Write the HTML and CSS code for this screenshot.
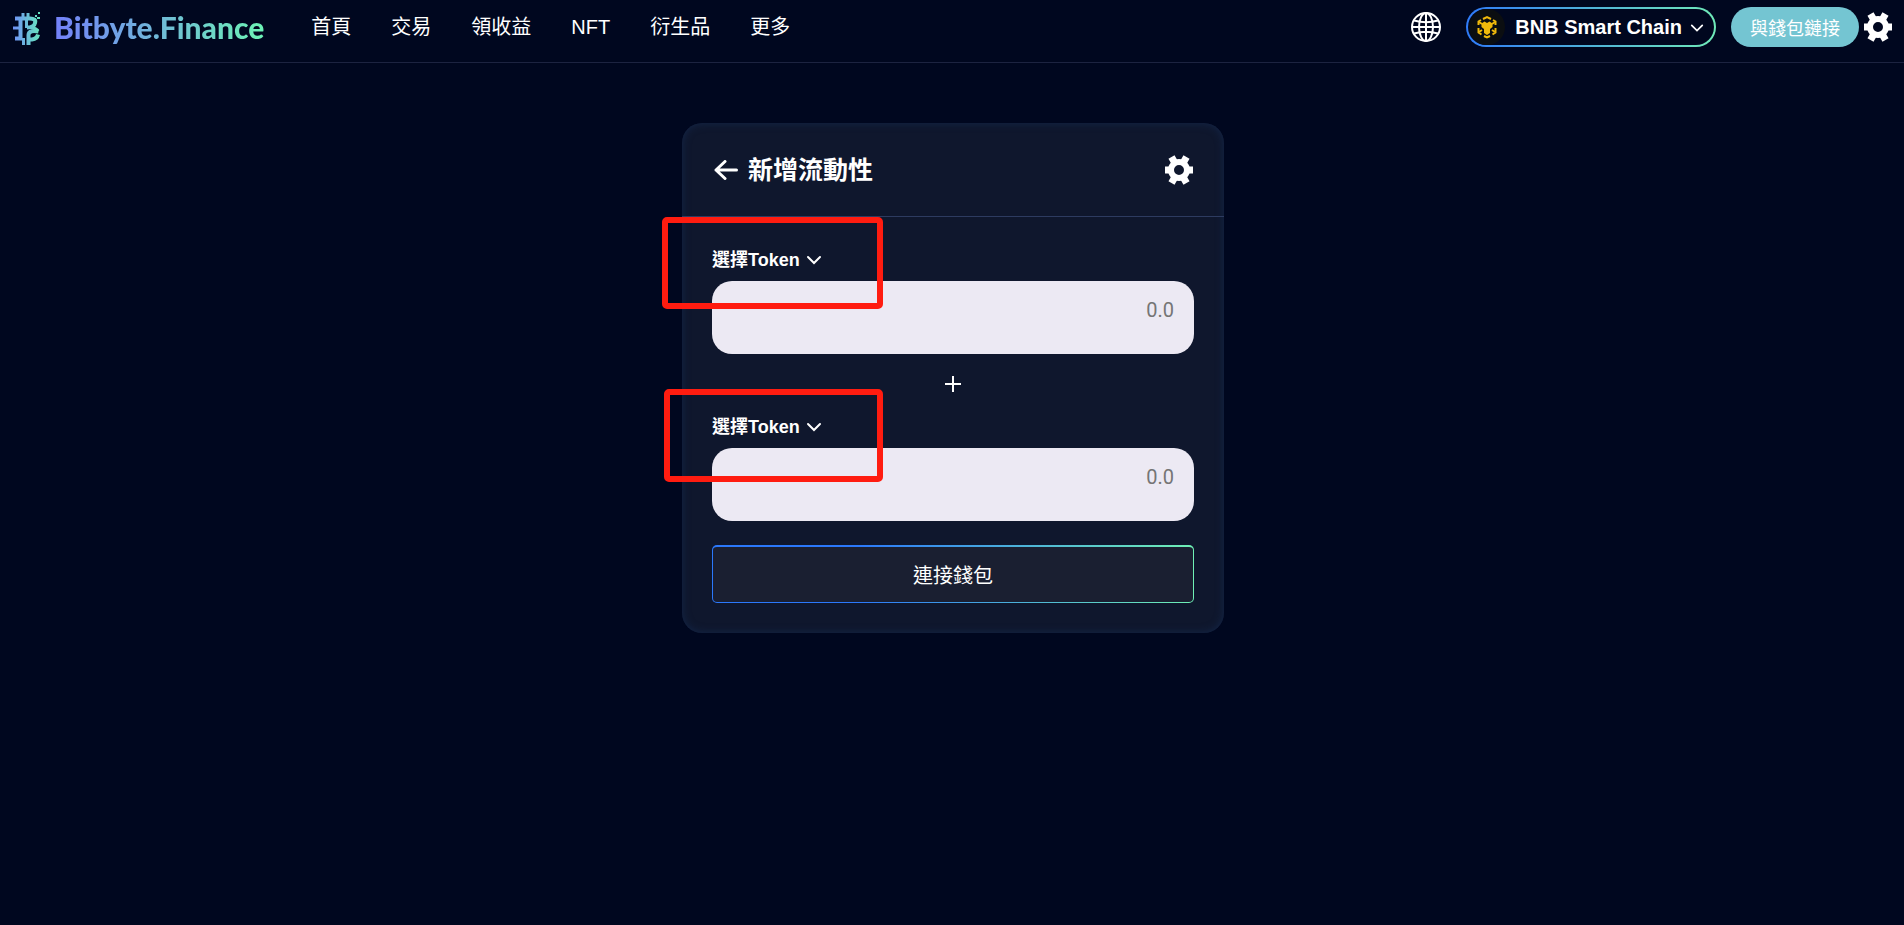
FILE: index.html
```html
<!DOCTYPE html>
<html lang="zh-Hant">
<head>
    <meta charset="UTF-8">
    <meta name="viewport" content="width=device-width, initial-scale=1.0">
    <title>Bitbyte.Finance</title>
    <link rel="stylesheet" href="styles.css">
</head>
<body>
    <svg class="sprite" width="0" height="0" aria-hidden="true">
        <symbol id="gear" viewBox="-15 -15 30 30">
            <g fill="none" stroke="currentColor">
                <circle r="8" stroke-width="6"/>
                <g stroke-width="7">
                    <path d="M-14 0H-9M9 0H14"/>
                    <path d="M-15 0H-9M9 0H15" transform="rotate(60)"/>
                    <path d="M-15 0H-9M9 0H15" transform="rotate(120)"/>
                </g>
            </g>
        </symbol>
        <symbol id="chevron" viewBox="0 0 16 10">
            <path d="M2 2l6 6 6-6" fill="none" stroke="currentColor" stroke-width="2" stroke-linecap="round"/>
        </symbol>
    </svg>

    <header class="header">
        <a href="#" class="logo">
            <svg class="logo-icon" viewBox="0 0 30 36" aria-hidden="true">
                <defs>
                    <linearGradient id="logo-gradient" gradientUnits="userSpaceOnUse" x1="2" y1="0" x2="28" y2="0">
                        <stop offset="0" stop-color="#6f93f5"/>
                        <stop offset="1" stop-color="#66e6bd"/>
                    </linearGradient>
                </defs>
                <g fill="none" stroke="url(#logo-gradient)">
                    <path d="M3 9.500H18C22 9.500 24 11 23 14C22.500 17 20 18.500 15 18.500M8.500 9V30M3 29.500H10" stroke-width="4"/>
                    <path d="M1 19H8M11 4V9M16 4V9M11.500 29V36" stroke-width="3"/>
                    <path d="M14.500 10V19" stroke-width="3"/>
                    <path d="M26.500 22.500C22 21.500 16.500 21.500 16.500 26V36M17 30.500H20C24 30 25.500 28 26 25.500" stroke-width="4"/>
                    <path d="M19 18.500C23 19 25 20 26 22" stroke-width="3"/>
                </g>
                <g fill="url(#logo-gradient)">
                    <path d="M23 6h2v2h-2zM26 3h2v2h-2zM25 8h3v2h-3zM22 9h2v2h-2z"/>
                </g>
            </svg>
            <span class="logo-text">Bitbyte.Finance</span>
        </a>

        <nav class="nav">
            <a href="#">首頁</a>
            <a href="#">交易</a>
            <a href="#">領收益</a>
            <a href="#">NFT</a>
            <a href="#">衍生品</a>
            <a href="#">更多</a>
        </nav>

        <div class="header-actions">
            <button type="button" class="icon-button language" aria-label="語言">
                <svg width="32" height="32" viewBox="0 0 32 32" fill="none" stroke="currentColor" stroke-width="2" aria-hidden="true">
                    <circle cx="16" cy="16" r="14"/>
                    <ellipse cx="16" cy="16" rx="7" ry="14"/>
                    <path d="M16 2V30M2 16H30M4 9.500Q16 13 28 9.500M4 22.500Q16 19 28 22.500"/>
                </svg>
            </button>
            <button type="button" class="chain">
                <svg class="chain-icon" viewBox="0 0 36 36" aria-hidden="true">
                    <circle cx="18" cy="18" r="18" fill="#0b0e11"/>
                    <g fill="none" stroke="#f0b90b" stroke-width="2">
                        <path d="M14 10L18 8L22 10M12 11L9.500 12.500V16M24 11L26.500 12.500V16M9.500 19V23.500L12.500 25.500M26.500 19V23.500L23.500 25.500M15 27L18 28.500L21 27"/>
                        <path d="M10 13L13 15M26 13L23 15M10 23L13 21M26 23L23 21"/>
                    </g>
                    <path d="M12.500 14.500L15.500 12.500L18 14L20.500 12.500L23.500 14.500V18L21 20V24L18 26L15 24V20L12.500 18Z" fill="#f0b90b"/>
                </svg>
                <span>BNB Smart Chain</span>
                <svg class="chevron" aria-hidden="true"><use href="#chevron"/></svg>
            </button>
            <button type="button" class="wallet">與錢包鏈接</button>
            <button type="button" class="icon-button" aria-label="設定">
                <svg width="30" height="30" aria-hidden="true"><use href="#gear"/></svg>
            </button>
        </div>
    </header>

    <main class="main">
        <section class="card">
            <div class="card-header">
                <a href="#" class="back" aria-label="返回">
                    <svg width="24" height="20" viewBox="0 0 24 20" aria-hidden="true">
                        <path d="M11 1.500L2 10L11 18.500M2 10H22.500" fill="none" stroke="currentColor" stroke-width="3" stroke-linecap="round" stroke-linejoin="round"/>
                    </svg>
                </a>
                <h1>新增流動性</h1>
                <button type="button" class="icon-button" aria-label="交易設定">
                    <svg width="30" height="30" aria-hidden="true"><use href="#gear"/></svg>
                </button>
            </div>

            <form class="card-body">
                <div class="token">
                    <button type="button" class="token-select">
                        選擇Token
                        <svg class="chevron" aria-hidden="true"><use href="#chevron"/></svg>
                    </button>
                    <div class="amount">
                        <input type="text" placeholder="0.0" aria-label="第一個 Token 數量">
                    </div>
                    <div class="highlight highlight-first"></div>
                </div>

                <div class="plus">
                    <svg width="18" height="18" viewBox="0 0 18 18" aria-hidden="true">
                        <path d="M9 1V17M1 9H17" stroke="currentColor" stroke-width="2"/>
                    </svg>
                </div>

                <div class="token">
                    <button type="button" class="token-select">
                        選擇Token
                        <svg class="chevron" aria-hidden="true"><use href="#chevron"/></svg>
                    </button>
                    <div class="amount">
                        <input type="text" placeholder="0.0" aria-label="第二個 Token 數量">
                    </div>
                    <div class="highlight highlight-second"></div>
                </div>

                <button type="button" class="connect">連接錢包</button>
            </form>
        </section>
    </main>
</body>
</html>
```
FILE: styles.css
```css
* {
    box-sizing: border-box;
}

body {
    margin: 0;
    min-height: 100vh;
    background-color: #00071f;
    color: #fff;
    font-family: "Liberation Sans", "Noto Sans CJK TC", sans-serif;
    font-size: 20px;
}

a {
    color: inherit;
    text-decoration: none;
}

button {
    padding: 0;
    border: none;
    background: none;
    color: inherit;
    font: inherit;
    cursor: pointer;
}

svg {
    display: block;
}

.sprite {
    position: absolute;
}

.header {
    display: flex;
    align-items: center;
    padding: 7px 11px 15px 12px;
    border-bottom: 1px solid #1c2340;
}

.logo {
    display: flex;
    align-items: center;
    gap: 12px;
}

.logo-icon {
    width: 30px;
    height: 36px;
}

.logo-text {
    background: linear-gradient(90deg, #7380fa, #6cf3b5);
    -webkit-background-clip: text;
    background-clip: text;
    color: transparent;
    font-family: Lato, sans-serif;
    font-size: 30px;
    font-weight: 900;
    line-height: 40px;
}

.nav {
    display: flex;
    gap: 40px;
    margin-left: 47px;
    line-height: 40px;
}

.header-actions {
    display: flex;
    align-items: center;
    margin-left: auto;
}

.language {
    margin-right: 24px;
}

.chain {
    display: flex;
    align-items: center;
    height: 40px;
    margin-right: 15px;
    padding: 0 10px 0 1px;
    border: 2px solid transparent;
    border-radius: 20px;
    background:
        linear-gradient(#00071f, #00071f) padding-box,
        linear-gradient(90deg, #2f7bf8, #6feab8) border-box;
    font-weight: bold;
}

.chain-icon {
    width: 36px;
    height: 36px;
    margin-right: 10px;
}

.chevron {
    width: 16px;
    height: 10px;
}

.chain .chevron {
    width: 14px;
    margin: 2px 0 0 8px;
}

.wallet {
    height: 40px;
    margin-right: 4px;
    padding: 0 19px;
    border-radius: 20px;
    background-color: #74c5d2;
    font-size: 18px;
}

.main {
    display: flex;
    justify-content: center;
    padding: 60px 16px 60px 18px;
}

.card {
    width: 100%;
    max-width: 542px;
    border-radius: 20px;
    background-color: #0f172d;
    box-shadow: inset 0 0 8px #14274a;
}

.card-header {
    display: flex;
    align-items: center;
    padding: 28px 30px 27px 32px;
    border-bottom: 1px solid #2d3b60;
}

.card-header h1 {
    margin: 0 auto 0 10px;
    font-size: 25px;
    line-height: 38px;
}

.card-body {
    padding: 30px;
}

.token {
    position: relative;
}

.token-select {
    display: flex;
    align-items: center;
    gap: 6px;
    margin-bottom: 8px;
    font-size: 18px;
    font-weight: bold;
    line-height: 26px;
}

.amount {
    height: 73px;
    padding: 15px 20px;
    border-radius: 20px;
    background-color: #ece9f3;
}

.amount input {
    width: 100%;
    padding: 0;
    border: none;
    outline: none;
    background: none;
    color: #222;
    font-family: Roboto, sans-serif;
    font-size: 20px;
    line-height: 28px;
    text-align: right;
}

.amount input::placeholder {
    color: #757575;
}

.highlight {
    position: absolute;
    border: 6px solid #ff1c10;
    border-radius: 5px;
    pointer-events: none;
}

.highlight-first {
    top: -30px;
    left: -50px;
    width: 221px;
    height: 92px;
}

.highlight-second {
    top: -25px;
    left: -48px;
    width: 219px;
    height: 93px;
}

.plus {
    display: flex;
    justify-content: center;
    padding: 21px 0;
}

.connect {
    display: block;
    width: 100%;
    height: 58px;
    margin-top: 24px;
    border: 1px solid transparent;
    border-top-width: 2px;
    border-radius: 5px;
    background:
        linear-gradient(#1a1f31, #1a1f31) padding-box,
        linear-gradient(90deg, #2b78fb 30%, #6ff0b5) border-box;
}
```
